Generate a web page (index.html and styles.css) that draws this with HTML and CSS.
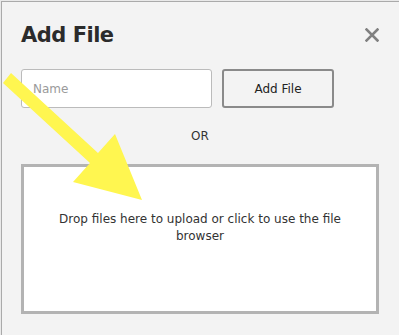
FILE: index.html
```html
<!DOCTYPE html>
<html lang="en">
<head>
  <meta charset="UTF-8">
  <title>Add File</title>
  <link rel="stylesheet" href="styles.css">
</head>
<body>
  <div class="dialog">
    <div class="dialog-head">
      <h2 class="dialog-title">Add File</h2>
      <button class="close-btn" aria-label="Close">
        <svg width="14" height="14" viewBox="0 0 14 14">
          <path d="M1.5 1.5L12.5 12.5M12.5 1.5L1.5 12.5" stroke="#808080" stroke-width="2.6" stroke-linecap="square"/>
        </svg>
      </button>
    </div>
    <div class="add-row">
      <input class="name-input" type="text" placeholder="Name">
      <button class="add-btn">Add File</button>
    </div>
    <p class="or">OR</p>
    <div class="drop-zone">
      <p class="drop-text">Drop files here to upload or click to use the file browser</p>
    </div>
  </div>
  <!-- pointer drawn over the dialog -->
  <svg class="pointer" width="150" height="210" viewBox="0 0 150 210">
    <polygon points="11,73 98,153 115,134 142,200 73,182 90,163 3,83" fill="#fff650"/>
  </svg>
</body>
</html>
```

FILE: styles.css
```css
body { margin: 0; padding: 1px 0 0 1px; background: #e9e9e9; font-family: 'DejaVu Sans', 'Liberation Sans', sans-serif; color: #333; overflow: hidden; position: relative; height: 334px; }
.dialog { box-sizing: border-box; width: 400px; height: 340px; background: #f3f3f3; border-left: 1px solid #aaa; border-top: 1px solid #aaa; padding: 20px 22px 0 19px; }
.dialog-head { display: flex; justify-content: space-between; align-items: center; height: 26px; }
.dialog-title { margin: 0; font-size: 21px; font-weight: 700; color: #2b2b2b; letter-spacing: -0.5px; }
.close-btn { background: none; border: none; padding: 0; margin-right: 0; width: 14px; height: 14px; cursor: pointer; display: flex; }
.add-row { display: flex; gap: 10px; margin-top: 21px; }
.name-input { box-sizing: border-box; width: 191px; height: 39px; border: 1px solid #bbb; border-radius: 3px; padding: 0 11px; font-family: inherit; font-size: 12px; background: #fff; color: #333; }
.name-input::placeholder { color: #9a9a9a; }
.add-btn { box-sizing: border-box; width: 112px; height: 39px; border: 2px solid #8a8a8a; border-radius: 3px; background: #f3f3f3; font-family: inherit; font-size: 12px; color: #222; cursor: pointer; }
.or { margin: 21px 0 0; text-align: center; font-size: 12px; line-height: 15px; }
.drop-zone { box-sizing: border-box; height: 150px; margin-top: 20px; border: 3px solid #b3b3b3; background: #fff; padding: 44px 34px 0; cursor: pointer; }
.drop-text { margin: 0; text-align: center; font-size: 12px; line-height: 17px; }
.pointer { position: absolute; top: 0; left: 0; pointer-events: none; }
```
